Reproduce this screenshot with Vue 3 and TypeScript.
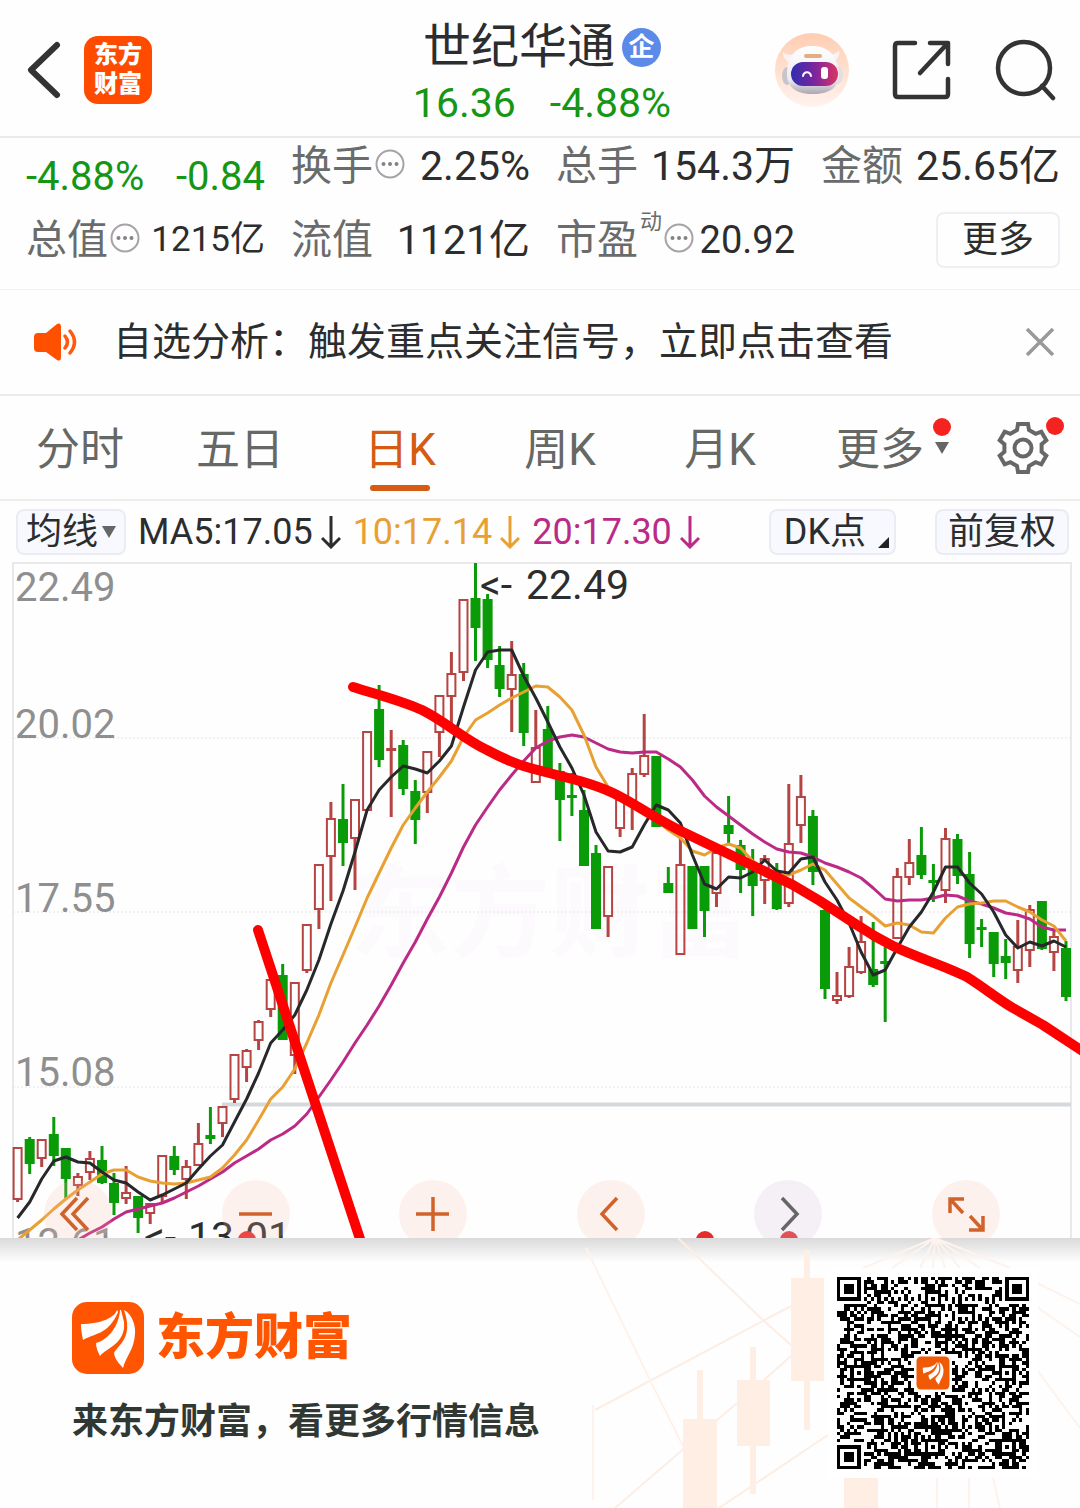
<script setup lang="ts">
type Candle = ['u' | 'd', number, number, number, number]

const tabs = ['分时', '五日', '日K', '周K', '月K']
const activeTab = '日K'

const averages = [
  { text: 'MA5:17.05', tone: 'dark' },
  { text: '10:17.14', tone: 'amber' },
  { text: '20:17.30', tone: 'magenta' },
]

/* direction, high, body top, body bottom, low */
const candles: Candle[] = [
  ['u', 1148, 1148, 1199, 1202], ['d', 1137, 1140, 1163, 1174], ['u', 1139, 1140, 1158, 1167], ['d', 1117, 1135, 1155, 1166],
  ['d', 1148, 1149, 1178, 1198], ['u', 1173, 1177, 1185, 1196], ['u', 1151, 1159, 1172, 1180], ['d', 1146, 1161, 1182, 1184],
  ['d', 1173, 1184, 1202, 1215], ['u', 1166, 1193, 1198, 1204], ['d', 1196, 1197, 1217, 1233], ['u', 1204, 1204, 1213, 1224],
  ['u', 1156, 1156, 1196, 1202], ['d', 1146, 1157, 1169, 1175], ['u', 1160, 1167, 1179, 1199], ['u', 1123, 1144, 1165, 1166],
  ['d', 1107, 1136, 1138, 1144], ['u', 1106, 1107, 1123, 1137], ['u', 1054, 1055, 1099, 1103], ['u', 1049, 1051, 1067, 1082],
  ['u', 1020, 1022, 1040, 1050], ['u', 980, 980, 1009, 1017], ['d', 964, 976, 1039, 1039], ['u', 983, 983, 1055, 1074],
  ['u', 924, 925, 970, 973], ['u', 864, 865, 909, 929], ['u', 802, 819, 856, 901], ['d', 784, 820, 842, 866],
  ['u', 799, 800, 838, 890], ['u', 731, 732, 810, 811], ['d', 685, 710, 759, 767], ['u', 730, 749, 750, 817],
  ['d', 740, 746, 788, 795], ['d', 780, 792, 819, 844], ['u', 752, 752, 792, 813], ['u', 696, 696, 732, 757],
  ['u', 652, 674, 696, 723], ['u', 599, 600, 672, 681], ['d', 563, 599, 627, 661], ['d', 594, 600, 659, 668],
  ['d', 646, 666, 688, 697], ['u', 641, 675, 689, 732], ['d', 663, 675, 732, 746], ['u', 710, 748, 782, 783],
  ['d', 706, 730, 772, 774], ['d', 763, 772, 799, 841], ['d', 773, 796, 797, 816], ['d', 790, 811, 865, 865],
  ['d', 845, 854, 928, 929], ['u', 866, 867, 916, 937], ['u', 798, 800, 828, 837], ['u', 768, 774, 805, 830],
  ['u', 714, 756, 774, 777], ['d', 756, 757, 826, 826], ['d', 867, 884, 892, 892], ['u', 838, 865, 954, 954],
  ['d', 867, 867, 928, 929], ['d', 867, 867, 910, 937], ['u', 850, 853, 893, 907], ['d', 796, 826, 833, 843],
  ['d', 840, 846, 869, 893], ['d', 849, 870, 885, 916], ['u', 855, 859, 880, 904], ['d', 863, 873, 908, 910],
  ['u', 784, 844, 903, 907], ['u', 775, 797, 825, 843], ['d', 810, 817, 871, 885], ['d', 906, 911, 988, 999],
  ['u', 972, 996, 1000, 1004], ['u', 947, 967, 996, 998], ['u', 916, 942, 972, 974], ['d', 922, 970, 984, 987],
  ['d', 947, 962, 963, 1022], ['u', 868, 877, 938, 938], ['u', 839, 863, 877, 885], ['d', 827, 856, 874, 879],
  ['d', 864, 881, 882, 902], ['u', 828, 839, 890, 903], ['d', 834, 840, 875, 884], ['d', 852, 875, 943, 958],
  ['d', 919, 928, 929, 947], ['d', 933, 933, 963, 977], ['d', 939, 957, 962, 979], ['u', 920, 947, 970, 983],
  ['u', 905, 910, 950, 967], ['d', 902, 902, 948, 950], ['u', 930, 937, 952, 971], ['d', 941, 949, 996, 1001],
]

const ma5 = [1218, 1202, 1179, 1161, 1157, 1162, 1163, 1172, 1180, 1183, 1192, 1200, 1195, 1189, 1183, 1169, 1156, 1145, 1122, 1099, 1073, 1043, 1030, 1015, 990, 960, 924, 891, 852, 810, 790, 777, 766, 769, 773, 761, 746, 707, 670, 652, 650, 650, 676, 698, 722, 747, 768, 795, 832, 851, 852, 847, 825, 805, 810, 823, 855, 884, 889, 877, 878, 872, 860, 871, 873, 859, 857, 882, 900, 923, 952, 975, 970, 948, 927, 912, 892, 867, 867, 883, 894, 912, 935, 948, 942, 946, 941, 947]
const ma10 = [1240, 1230, 1220, 1209, 1199, 1190, 1182, 1174, 1170, 1170, 1177, 1181, 1183, 1184, 1183, 1180, 1177, 1168, 1155, 1140, 1120, 1099, 1087, 1069, 1043, 1015, 983, 955, 927, 898, 873, 848, 825, 808, 792, 777, 761, 737, 720, 713, 705, 698, 692, 686, 687, 697, 710, 735, 767, 787, 798, 807, 813, 820, 830, 838, 851, 855, 848, 844, 848, 861, 870, 876, 875, 870, 864, 870, 884, 898, 907, 916, 926, 923, 925, 932, 933, 918, 907, 904, 903, 901, 901, 907, 912, 920, 926, 941]
const ma20 = [1240, 1233, 1227, 1219, 1212, 1209, 1206, 1203, 1198, 1192, 1186, 1179, 1172, 1163, 1156, 1149, 1140, 1134, 1126, 1114, 1097, 1080, 1062, 1043, 1025, 1006, 985, 963, 942, 919, 897, 873, 847, 825, 807, 790, 775, 761, 748, 741, 737, 735, 737, 743, 749, 752, 753, 752, 752, 759, 767, 780, 796, 807, 816, 825, 834, 842, 849, 852, 853, 857, 863, 867, 872, 878, 888, 899, 901, 900, 900, 898, 895, 896, 901, 904, 908, 913, 915, 919, 927, 930, 930]

const xAt = (i: number): number => Math.round((17.6 + 12.05 * i) * 10) / 10
const line = (values: number[], first = 0): string =>
  values.map((y, i) => `${xAt(i + first)},${y}`).join(' ')

const axisLabels = [
  { y: 601, text: '22.49' },
  { y: 738, text: '20.02' },
  { y: 912, text: '17.55' },
  { y: 1086, text: '15.08' },
  { y: 1257, text: '12.61' },
]
const gridLines = [738, 912, 1087]

const tools = [
  { label: '最早', d: 'M33 18 18 34l15 16M44 18 29 34l15 16', muted: false },
  { label: '缩小', d: 'M17 34h33', muted: false },
  { label: '放大', d: 'M17 34h33M34 17v34', muted: false },
  { label: '左移', d: 'M40 18 25 34l15 16', muted: false },
  { label: '右移', d: 'M28 18 43 34 28 50', muted: true },
  { label: '全屏', d: 'M18 33V19h14M19 20l12 13M51 36v14H37M50 49 38 36', muted: false },
]

/* QR symbol of 57 modules */
const size = 57
function ring(x: number, y: number, cx: number, cy: number): number {
  return Math.max(Math.abs(x - cx), Math.abs(y - cy))
}
function buildModules(): string {
  let seed = 20931
  let d = ''
  for (let y = 0; y < size; y++) {
    for (let x = 0; x < size; x++) {
      seed = (seed + 0x6d2b79f5) | 0
      let t = Math.imul(seed ^ (seed >>> 15), 1 | seed)
      t = (t + Math.imul(t ^ (t >>> 7), 61 | t)) ^ t
      let on = ((t ^ (t >>> 14)) >>> 0) % 100 < 51
      if (x === 6 || y === 6) on = (x + y) % 2 === 0
      for (const [cx, cy] of [[28, 6], [6, 28], [50, 28], [28, 50], [50, 50]]) {
        const r = ring(x, y, cx, cy)
        if (r <= 2) on = r !== 1
      }
      for (const [cx, cy] of [[3, 3], [53, 3], [3, 53]]) {
        const r = ring(x, y, cx, cy)
        if (r <= 4) on = r === 3 || r <= 1
      }
      if (ring(x, y, 28, 28) <= 5) on = false
      if (on) d += `M${x} ${y}h1v1h-1z`
    }
  }
  return d
}
const qrPath = buildModules()
const feather =
  'M45 8C43 15 30 22 9 22C9 28 10 33 11 38C20 32 37 33 46 10Z M48 8C47 24 36 38 24 41C24 46 26 50 28 54C34 46 54 42 52 20L49 8Z M52 8C60 12 64 24 63 32C62 48 54 54 51 66C47 61 43 58 42 51C46 43 62 36 52 8Z'
</script>

<template>
  <main class="page">
    <header class="top">
      <div class="top-left">
        <button class="plain" aria-label="返回">
          <svg width="36" height="60" viewBox="0 0 36 60"><path d="M31 5 5 30l26 25" fill="none" stroke="#333" stroke-width="6" stroke-linecap="round" stroke-linejoin="round" /></svg>
        </button>
        <a class="app-logo" href="#"><span>东方</span><span>财富</span></a>
      </div>
      <div class="title">
        <h1>世纪华通<span class="badge">企</span></h1>
        <p class="green"><span>16.36</span><span>-4.88%</span></p>
      </div>
      <div class="top-right">
        <button class="plain" aria-label="智能助手">
          <svg width="76" height="76" viewBox="0 0 76 76">
            <defs>
              <linearGradient id="halo" x1="0" y1="0" x2="0" y2="1"><stop offset="0" stop-color="#ffcdb2" /><stop offset="1" stop-color="#fff3ee" /></linearGradient>
              <linearGradient id="visor"><stop offset="0" stop-color="#2f2fae" /><stop offset=".5" stop-color="#7b259f" /><stop offset="1" stop-color="#dc3560" /></linearGradient>
              <linearGradient id="shell" x1="0" y1="0" x2="0" y2="1"><stop offset="0" stop-color="#fff" /><stop offset=".7" stop-color="#eeeaf0" /><stop offset="1" stop-color="#aaa7b2" /></linearGradient>
            </defs>
            <circle cx="38" cy="38" r="37" fill="url(#halo)" />
            <path d="M9 20C9 25 11 28 15 30L20 22C14 24 11 22 9 20ZM65 18C66 24 64 27 60 29L55 22C60 23 63 21 65 18Z" fill="#f8f2f3" />
            <ellipse cx="13" cy="44" rx="5" ry="9" fill="#c9c4cc" /><ellipse cx="64" cy="43" rx="5" ry="9" fill="#e4dde2" />
            <path d="M13 40C14 23 23 14 38 14s25 8 27 26c1 15-9 22-26 22S12 55 13 40Z" fill="url(#shell)" />
            <rect x="30" y="22" width="18" height="4" rx="2" fill="#e2ad83" />
            <rect x="17" y="30" width="47" height="24" rx="12" fill="url(#visor)" />
            <path d="M29 44c1-5 7-5 8 0" fill="none" stroke="#fff" stroke-width="2" stroke-linecap="round" />
            <rect x="47" y="35" width="7" height="12" rx="3" fill="#fff" />
          </svg>
        </button>
        <button class="plain" aria-label="分享">
          <svg width="60" height="60" viewBox="0 0 60 60"><path d="M23 3H6Q3 3 3 6v48q0 3 3 3h47q3 0 3-3V39M38 3h18v21M55 4 28 33" fill="none" stroke="#333" stroke-width="4.500" stroke-linecap="round" stroke-linejoin="round" /></svg>
        </button>
        <button class="plain" aria-label="搜索">
          <svg width="64" height="62" viewBox="0 0 64 62"><g fill="none" stroke="#333" stroke-width="4.500" stroke-linecap="round"><circle cx="30" cy="29" r="26" /><path d="m48 47 11 12" /></g></svg>
        </button>
      </div>
    </header>

    <section class="stats">
      <div class="cell green quote"><span>-4.88%</span><span>-0.84</span></div>
      <div class="cell"><span class="name">换手<svg class="info" width="30" height="30" viewBox="0 0 30 30"><circle cx="15" cy="15" r="13.500" /><path d="M8.500 15h.01M15 15h.01M21.500 15h.01" /></svg></span><b>2.25%</b></div>
      <div class="cell"><span class="name">总手</span><b>154.3万</b></div>
      <div class="cell"><span class="name">金额</span><b>25.65亿</b></div>
      <div class="cell"><span class="name">总值<svg class="info" width="30" height="30" viewBox="0 0 30 30"><circle cx="15" cy="15" r="13.500" /><path d="M8.500 15h.01M15 15h.01M21.500 15h.01" /></svg></span><b class="small">1215亿</b></div>
      <div class="cell"><span class="name">流值</span><b>1121亿</b></div>
      <div class="cell"><span class="name">市盈<sup>动</sup><svg class="info" width="30" height="30" viewBox="0 0 30 30"><circle cx="15" cy="15" r="13.500" /><path d="M8.500 15h.01M15 15h.01M21.500 15h.01" /></svg></span><b class="medium">20.92</b></div>
      <button class="more">更多</button>
    </section>

    <section class="notice">
      <svg width="46" height="38" viewBox="0 0 46 38"><path d="M5 10h8L24 1q4-2 4 3v30q0 5-4 3l-11-8H5q-4 0-4-4V14q0-4 4-4Z" fill="#ff5000" /><path d="M32 13q5 6 0 12M37 8q9 11 0 22" fill="none" stroke="#ff5a10" stroke-width="3.500" stroke-linecap="round" /></svg>
      <a href="#">自选分析：触发重点关注信号，立即点击查看</a>
      <button class="plain" aria-label="关闭"><svg width="32" height="32" viewBox="0 0 32 32"><path d="m3 3 26 26M29 3 3 29" stroke="#999" stroke-width="3.500" /></svg></button>
    </section>

    <nav class="tabs">
      <button v-for="t in tabs" :key="t" class="tab" :class="{ active: t === activeTab }">{{ t }}</button>
      <button class="tab"><span class="anchor">更多<i class="dot"></i><svg class="caret" width="14" height="12" viewBox="0 0 14 12"><path d="M0 0h14L7 12Z" fill="#666" /></svg></span></button>
      <button class="tab gear" aria-label="设置">
        <span class="anchor">
          <svg width="52" height="54" viewBox="0 0 52 54"><g fill="none" stroke="#666866" stroke-width="4"><path d="M20 9 21 3H31L32 9 38.600 12.800 44.300 10.700 49.300 19.300 44.600 23.200V30.800L49.300 34.700 44.300 43.300 38.600 41.200 32 45 31 51H21L20 45 13.400 41.200 7.700 43.300 2.700 34.700 7.400 30.800V23.200L2.700 19.300 7.700 10.700 13.400 12.800Z" /><circle cx="26" cy="27" r="8.500" /></g></svg>
          <i class="dot"></i>
        </span>
      </button>
    </nav>

    <section class="indicators">
      <button class="chip">均线<svg width="14" height="12" viewBox="0 0 14 12"><path d="M0 0h14L7 12Z" fill="#666" /></svg></button>
      <span v-for="a in averages" :key="a.text" class="avg" :class="a.tone">{{ a.text }}<svg width="20" height="34" viewBox="0 0 20 34"><path d="M10 1v31M1 23l9 9 9-9" fill="none" stroke="currentColor" stroke-width="3" /></svg></span>
      <button class="chip dk">DK点<svg width="11" height="11" viewBox="0 0 11 11"><path d="M11 0v11H0Z" fill="#222" /></svg></button>
      <button class="chip adjust">前复权</button>
    </section>

    <section class="chart">
      <svg class="plot" viewBox="0 562 1080 676">
        <text class="mark" x="350" y="949">东方财富</text>
        <path d="M13 1238V563H1071V1238" fill="none" stroke="#e9e9ec" stroke-width="2" />
        <path v-for="g in gridLines" :key="g" :d="`M13 ${g}H1071`" stroke="#e6e4e6" stroke-width="1" stroke-dasharray="2 2" />
        <path d="M222 1104.500H1071" stroke="#d6d9dc" stroke-width="4" />
        <text v-for="a in axisLabels" :key="a.text" class="axis" x="15" :y="a.y">{{ a.text }}</text>
        <g v-for="(c, i) in candles" :key="i" :class="c[0] === 'u' ? 'up' : 'down'">
          <path :d="`M${xAt(i)} ${c[1]}V${c[2]}M${xAt(i)} ${c[3]}V${c[4]}`" />
          <rect :x="xAt(i) - 4" :y="c[2]" width="8" :height="c[3] - c[2]" />
        </g>
        <g class="ma">
          <polyline :points="line(ma20, 5)" stroke="#bb2a86" />
          <polyline :points="line(ma10)" stroke="#e9a033" />
          <polyline :points="line(ma5)" stroke="#262829" />
        </g>
        <text class="peak" x="480" y="599">&lt;-<tspan x="526">22.49</tspan></text>
        <text class="peak" x="144" y="1251">&lt;-<tspan x="188">13.01</tspan></text>
        <g fill="#e52b2b"><circle cx="247" cy="1240" r="9" /><circle cx="705" cy="1240" r="9" /><circle cx="789" cy="1240" r="9" /></g>
        <g class="drawn">
          <path d="M353 687C375 694 400 700 422 710C446 722 464 739 487 750C502 758 515 764 530 768L580 781C608 789 620 796 640 808C655 817 670 826 687 834L793 885L820 901L857 925Q875 937 893 946C918 958 945 966 967 977C983 987 998 999 1013 1008L1043 1025L1084 1052" />
          <path d="M258 930 362 1245" />
        </g>
      </svg>
      <div class="tools">
        <button v-for="t in tools" :key="t.label" class="tool" :class="{ muted: t.muted }" :aria-label="t.label">
          <svg width="68" height="68" viewBox="0 0 68 68"><path :d="t.d" fill="none" stroke="currentColor" stroke-width="3.500" /></svg>
        </button>
      </div>
    </section>

    <footer class="promo">
      <svg class="scene" width="500" height="270" viewBox="0 0 500 270">
        <g fill="none" stroke="#fdeee4" stroke-width="2">
          <path d="M15 172 211 68M98 0 185 84 211 107M35 270 157 165M184 142 211 118M139 270 248 197" />
          <path d="M6 10 70 142 104 210M355 0 283 30M355 0 312 30M355 0 340 30M355 0 353 30M355 0 365 30M355 0 380 30M355 0 400 30M355 0 430 30M457 45 500 66M457 69 500 99M457 132 500 190M357 240V270M389 240V270M413 240 420 270M13 167V262" stroke="#fef3ec" />
        </g>
        <g fill="#feeee4">
          <path d="M224 12h6v180h-6zM211 40h33v103h-33zM170 109h6v147h-6zM157 142h33v66h-33zM117 132h6v50h-6zM103 181h34v89h-34zM264 240h34v30h-34z" />
        </g>
      </svg>
      <div class="brand">
        <div class="brand-row">
          <svg width="72" height="72" viewBox="0 0 72 72"><rect width="72" height="72" rx="15" fill="#ff5500" /><path :d="feather" fill="#fff" /></svg>
          <strong>东方财富</strong>
        </div>
        <p>来东方财富，看更多行情信息</p>
      </div>
      <svg class="qr" width="192" height="192" viewBox="0 0 57 57" role="img" aria-label="二维码">
        <path :d="qrPath" fill="#000" shape-rendering="crispEdges" />
        <g transform="translate(23.600 23.600) scale(.136)"><rect width="72" height="72" rx="10" fill="#f05a05" /><path :d="feather" fill="#fff" transform="translate(6 6) scale(.84)" /></g>
      </svg>
    </footer>
  </main>
</template>

<style>
body {
  margin: 0;
  background: #fff;
}
</style>

<style scoped>
.page {
  font-family: Roboto, 'Noto Sans CJK SC', sans-serif;
  color: #2c2d2e;
  background: #fefefe;
  overflow: hidden;
}
button {
  font: inherit;
  color: inherit;
  border: 0;
  padding: 0;
  background: none;
}
a {
  color: inherit;
  text-decoration: none;
}
svg {
  display: block;
  flex: none;
}
.green {
  color: #159615;
}
.top {
  display: grid;
  grid-template-columns: 1fr auto 1fr;
  align-items: center;
  height: 132px;
  padding: 4px 22px 0 26px;
  border-bottom: 2px solid #e9eaef;
}
.top-left,
.top-right {
  display: flex;
  align-items: center;
}
.top-left {
  gap: 22px;
}
.top-right {
  justify-content: flex-end;
  gap: 42px;
}
.app-logo {
  display: flex;
  flex-direction: column;
  align-items: center;
  justify-content: center;
  width: 68px;
  height: 68px;
  border-radius: 14px;
  background: #ff4b00;
  color: #fff;
  font-size: 24px;
  line-height: 29px;
  font-weight: 900;
}
.title {
  display: flex;
  flex-direction: column;
  align-items: center;
  padding-top: 8px;
}
h1 {
  display: flex;
  align-items: center;
  gap: 7px;
  margin: 0;
  font-size: 48px;
  line-height: 58px;
  font-weight: 400;
}
.badge {
  width: 39px;
  height: 39px;
  border-radius: 50%;
  background: #5c8ae8;
  color: #fff;
  font-size: 26px;
  line-height: 38px;
  font-weight: 700;
  text-align: center;
}
.title p {
  display: flex;
  gap: 34px;
  margin: 0;
  font-size: 41px;
  line-height: 54px;
}
.stats {
  display: grid;
  grid-template-columns: repeat(4, 1fr);
  grid-auto-rows: 56px;
  gap: 18px 26px;
  padding: 0 20px 21px 26px;
  border-bottom: 1px solid #f0f0f2;
}
.cell {
  display: flex;
  align-items: center;
  justify-content: space-between;
  white-space: nowrap;
  font-size: 41px;
  line-height: 56px;
}
.cell b {
  font-weight: 400;
}
.cell .small {
  font-size: 35px;
}
.cell .medium {
  font-size: 38px;
}
.quote {
  align-self: end;
  font-size: 40px;
  line-height: 34px;
}
.name {
  display: flex;
  align-items: center;
  gap: 2px;
  color: #6a6c6c;
}
.name sup {
  align-self: flex-start;
  font-size: 22px;
  line-height: 20px;
}
.info {
  margin-bottom: 5px;
  fill: none;
  stroke: #a7a2a7;
  stroke-width: 2;
}
.info path {
  stroke: #858285;
  stroke-width: 4;
  stroke-linecap: round;
}
.more {
  justify-self: end;
  width: 124px;
  box-sizing: border-box;
  border: 2px solid #f1edf5;
  border-radius: 8px;
  font-size: 36px;
  line-height: 50px;
}
.notice {
  display: flex;
  align-items: center;
  height: 104px;
  padding: 0 24px 0 33px;
  gap: 34px;
  border-bottom: 2px solid #ebebef;
  font-size: 39px;
  line-height: 56px;
}
.notice a {
  flex: 1;
  white-space: nowrap;
}
.tabs {
  display: grid;
  grid-template-columns: repeat(6, 4fr) 3fr;
  height: 103px;
  border-bottom: 2px solid #f0ecee;
  font-size: 44px;
  line-height: 64px;
  color: #666866;
}
.tab {
  position: relative;
  padding-top: 4px;
  white-space: nowrap;
}
.active {
  color: #d65b12;
}
.active::after {
  content: '';
  position: absolute;
  left: 50%;
  bottom: 8px;
  width: 60px;
  height: 6px;
  margin-left: -30px;
  border-radius: 3px;
  background: #d65b12;
}
.anchor {
  position: relative;
  display: inline-block;
}
.dot {
  position: absolute;
  top: 0;
  right: -27px;
  width: 18px;
  height: 18px;
  border-radius: 50%;
  background: #f5231f;
}
.caret {
  position: absolute;
  top: 24px;
  right: -25px;
}
.gear {
  display: flex;
  align-items: center;
  justify-content: center;
  padding: 0 0 0 6px;
}
.gear .dot {
  top: -4px;
  right: -15px;
}
.indicators {
  display: flex;
  align-items: center;
  height: 61px;
  padding: 0 11px 0 16px;
  font-size: 36px;
  line-height: 42px;
  white-space: nowrap;
}
.chip {
  display: flex;
  align-items: center;
  justify-content: center;
  gap: 4px;
  box-sizing: border-box;
  height: 46px;
  padding: 0 8px;
  border: 2px solid #ebebf4;
  border-radius: 8px;
  background: #f7f9fe;
}
.avg {
  display: flex;
  align-items: center;
  gap: 8px;
  margin-left: 12px;
}
.amber {
  color: #e9a033;
}
.magenta {
  color: #bb2a86;
}
.dk {
  margin-left: auto;
  gap: 12px;
  padding: 0 5px 0 13px;
}
.dk svg {
  align-self: flex-end;
  margin-bottom: 5px;
}
.adjust {
  margin-left: 39px;
  padding: 0 11px;
}
.chart {
  position: relative;
  overflow: hidden;
}
.plot {
  width: 100%;
  height: auto;
}
.mark {
  font-size: 100px;
  font-weight: 700;
  fill: #fdfafd;
}
.axis {
  font-size: 40px;
  fill: #8f8f8f;
}
.peak {
  font-size: 41px;
  fill: #2c2d2e;
}
.up {
  stroke: #b54442;
  stroke-width: 2;
  fill: none;
}
.down {
  stroke: #0a9b08;
  stroke-width: 2;
  fill: #0a9b08;
}
.up path,
.down path {
  stroke-width: 3;
}
.ma {
  fill: none;
  stroke-width: 3;
  stroke-linejoin: round;
}
.drawn {
  fill: none;
  stroke: #f00;
  stroke-width: 10;
  stroke-linecap: round;
  stroke-linejoin: round;
}
.tools {
  position: absolute;
  left: 44px;
  right: 80px;
  bottom: -10px;
  display: flex;
  justify-content: space-between;
}
.tool {
  width: 68px;
  height: 68px;
  border-radius: 50%;
  background: rgba(250, 190, 170, 0.2);
  color: #d0622a;
}
.muted {
  background: rgba(215, 200, 225, 0.25);
  color: #666;
}
.promo {
  position: relative;
  display: flex;
  align-items: center;
  justify-content: space-between;
  padding: 39px 51px 39px 72px;
  background: linear-gradient(#dadada, #fefefe 24px);
}
.scene {
  position: absolute;
  top: 0;
  right: 0;
}
.brand {
  position: relative;
}
.brand-row {
  display: flex;
  align-items: center;
  gap: 12px;
}
.brand strong {
  font-size: 49px;
  line-height: 72px;
  font-weight: 900;
  color: #ff5500;
}
.brand p {
  margin: 26px 0 0;
  font-size: 36px;
  line-height: 44px;
  font-weight: 700;
  color: #313833;
}
.qr {
  position: relative;
  background: #fff;
  box-shadow: 0 0 0 9px #fff;
}
</style>
